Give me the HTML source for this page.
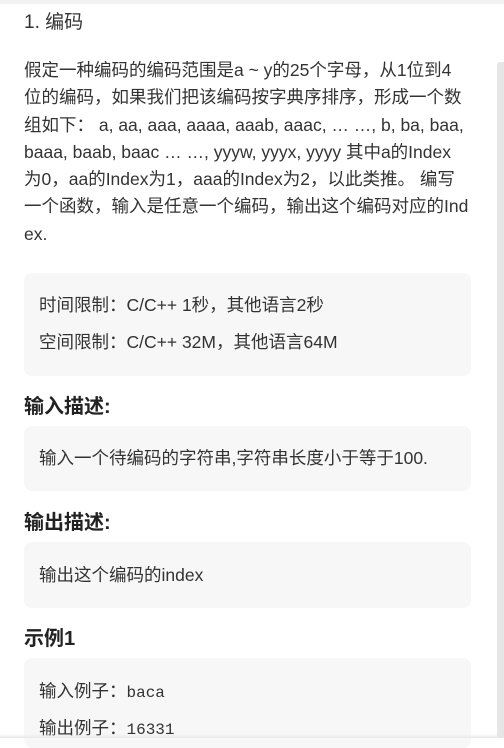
<!DOCTYPE html>
<html><head><meta charset="utf-8"><style>
*{margin:0;padding:0;box-sizing:border-box}
body{width:504px;height:738px;overflow:hidden;background:#fff;font-family:"Liberation Sans","Noto Sans CJK SC",sans-serif;color:#333;position:relative}
.top{position:absolute;left:0;top:0;width:504px;height:4px;background:#f2f2f2}
.sb{position:absolute;left:497px;top:62px;width:7px;height:676px;background:#e6e6e6;border-radius:3px 0 0 0}
.t{position:absolute;left:24px;top:10px;font-size:19px;line-height:26px}
.p{position:absolute;left:24px;top:57px;font-size:17.5px;line-height:27.3px;white-space:nowrap}
.box{position:absolute;left:24px;width:447px;background:#f7f7f7;border-radius:8px;font-size:17.5px}
.box div{position:absolute;left:15px;white-space:nowrap;line-height:24px}
h3{position:absolute;left:24px;font-size:20px;font-weight:bold;line-height:24px;color:#222}
.mono{font-family:"Liberation Mono",monospace;font-size:16px}
.sh{position:absolute;left:0;top:734px;width:497px;height:4px;background:linear-gradient(#fff0,#e8e8e8)}
</style></head><body>
<div class="top"></div>
<div class="sb"></div>
<div class="t">1. 编码</div>
<div class="p">假定一种编码的编码范围是a ~ y的25个字母，从1位到4<br>位的编码，如果我们把该编码按字典序排序，形成一个数<br>组如下： a, aa, aaa, aaaa, aaab, aaac, … …, b, ba, baa,<br>baaa, baab, baac … …, yyyw, yyyx, yyyy 其中a的Index<br>为0，aa的Index为1，aaa的Index为2，以此类推。 编写<br>一个函数，输入是任意一个编码，输出这个编码对应的Ind<br>ex.</div>
<div class="box" style="top:273px;height:103px"><div style="top:20px">时间限制：C/C++ 1秒，其他语言2秒</div><div style="top:57px">空间限制：C/C++ 32M，其他语言64M</div></div>
<h3 style="top:395px">输入描述:</h3>
<div class="box" style="top:426px;height:65px"><div style="top:20px">输入一个待编码的字符串,字符串长度小于等于100.</div></div>
<h3 style="top:511px">输出描述:</h3>
<div class="box" style="top:542px;height:66px"><div style="top:21px">输出这个编码的index</div></div>
<h3 style="top:627px">示例1</h3>
<div class="box" style="top:658px;height:90px"><div style="top:21px">输入例子：<span class="mono">baca</span></div><div style="top:58px">输出例子：<span class="mono">16331</span></div></div>
<div class="sh"></div>
</body></html>
